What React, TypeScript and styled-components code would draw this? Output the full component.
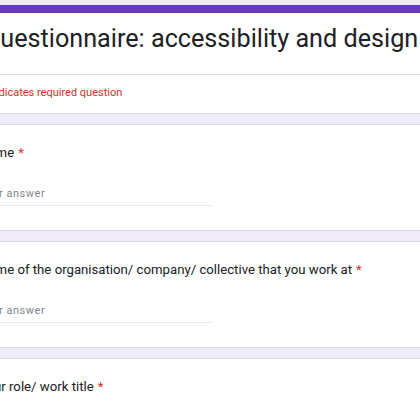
import styled, { createGlobalStyle } from "styled-components";

const GlobalStyle = createGlobalStyle`
  html, body {
    margin: 0;
    padding: 0;
    background: #f0ebf8;
    overflow: hidden;
  }
`;

const Page = styled.div`
  display: flex;
  flex-direction: column;
  gap: 10px;
  width: 520px;
  margin-left: -46px;
  padding-top: 5px;
  font-family: Roboto, "Liberation Sans", sans-serif;
`;

const Card = styled.div<{ $accent?: boolean }>`
  background: #ffffff;
  border: 1px solid #dadce0;
  border-top: ${(p) => (p.$accent ? "8px solid #673ab7" : "1px solid #dadce0")};
  border-radius: 8px;
  box-sizing: border-box;
`;

const TitleBlock = styled.div`
  padding: 11px 24px 0 28px;
  height: 62px;
  box-sizing: border-box;
  border-bottom: 1px solid #dadce0;
`;

const Title = styled.h1`
  margin: 0;
  font-family: Roboto, "Liberation Sans", sans-serif;
  font-size: 25.2px;
  font-weight: 400;
  line-height: 30px;
  color: #202124;
`;

const Required = styled.div`
  padding: 11px 24px 0 27px;
  height: 38px;
  box-sizing: border-box;
  font-size: 11px;
  line-height: 14px;
  color: #d93025;
`;

const QuestionBody = styled.div`
  display: flex;
  flex-direction: column;
  padding: 20px 24px 0;
  height: 105px;
  box-sizing: border-box;
`;

const Label = styled.div`
  font-size: 13.2px;
  line-height: 16px;
  color: #202124;
`;

const Star = styled.span`
  color: #d93025;
  margin-left: 4px;
`;

const Answer = styled.div`
  margin-top: 25px;
  width: 232px;
  padding-bottom: 3px;
  border-bottom: 1px solid #e8e8ea;
  font-size: 11px;
  line-height: 16px;
  letter-spacing: 0.5px;
  color: #80868b;
`;

const questions = [
  "Name",
  "Name of the organisation/ company/ collective that you work at",
  "Your role/ work title",
];

export default function App() {
  return (
    <>
      <GlobalStyle />
      <Page>
        <Card $accent>
          <TitleBlock>
            <Title>Questionnaire: accessibility and design</Title>
          </TitleBlock>
          <Required>* Indicates required question</Required>
        </Card>
        {questions.map((q) => (
          <Card key={q}>
            <QuestionBody>
              <Label>
                {q}
                <Star>*</Star>
              </Label>
              <Answer>Your answer</Answer>
            </QuestionBody>
          </Card>
        ))}
      </Page>
    </>
  );
}
